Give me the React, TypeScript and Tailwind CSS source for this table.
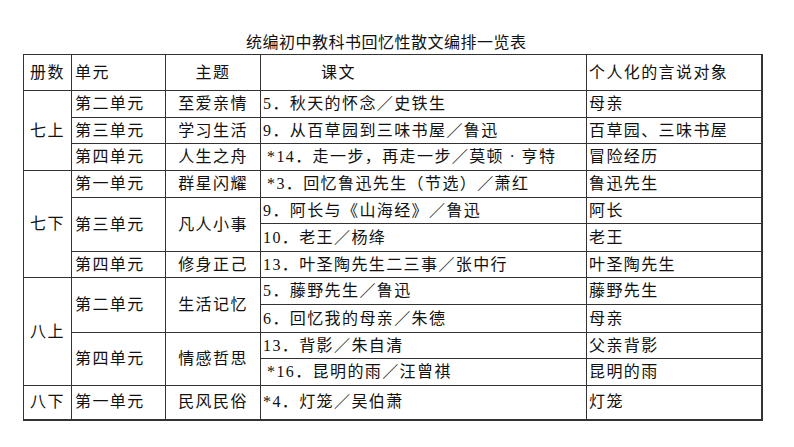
const cell = "border border-[#333] p-0 align-middle";
const unit = `${cell} pl-[3px] text-left`;
const theme = `${cell} text-center`;
const text = `${cell} pl-[2px] text-left`;
const obj = `${cell} pl-[2px] text-left border-r-2`;
const vol = `${cell} text-center`;

export default function App() {
  return (
    <div className="h-[447px] w-[794px] overflow-hidden bg-white text-[#111]">
      <h1 className="pt-[31px] pl-[246px] font-['Noto_Sans_CJK_SC',sans-serif] text-[16px] leading-[20px] tracking-[0.5px]">
        统编初中教科书回忆性散文编排一览表
      </h1>
      <table className="mt-[3px] ml-[23px] w-[738px] table-fixed border-collapse font-['Liberation_Serif','Noto_Sans_CJK_SC',serif] text-[16px] leading-[18px] tracking-[1.4px]">
        <colgroup>
          <col className="w-[48px]" />
          <col className="w-[94px]" />
          <col className="w-[95px]" />
          <col className="w-[326px]" />
          <col className="w-[175px]" />
        </colgroup>
        <tbody>
          <tr className="h-[36px]">
            <td className={vol}>册数</td>
            <td className={unit}>单元</td>
            <td className={theme}>主题</td>
            <td className={`${cell} pl-[60px] text-left`}>课文</td>
            <td className={obj}>个人化的言说对象</td>
          </tr>

          <tr className="h-[27px]">
            <td rowSpan={3} className={vol}>七上</td>
            <td className={unit}>第二单元</td>
            <td className={theme}>至爱亲情</td>
            <td className={text}>5．秋天的怀念／史铁生</td>
            <td className={obj}>母亲</td>
          </tr>
          <tr className="h-[26px]">
            <td className={unit}>第三单元</td>
            <td className={theme}>学习生活</td>
            <td className={text}>9．从百草园到三味书屋／鲁迅</td>
            <td className={obj}>百草园、三味书屋</td>
          </tr>
          <tr className="h-[27px]">
            <td className={unit}>第四单元</td>
            <td className={theme}>人生之舟</td>
            <td className={`${text} pl-[6px]`}>*14．走一步，再走一步／莫顿 · 亨特</td>
            <td className={obj}>冒险经历</td>
          </tr>

          <tr className="h-[27px]">
            <td rowSpan={4} className={vol}>七下</td>
            <td className={unit}>第一单元</td>
            <td className={theme}>群星闪耀</td>
            <td className={`${text} pl-[6px]`}>*3．回忆鲁迅先生（节选）／萧红</td>
            <td className={obj}>鲁迅先生</td>
          </tr>
          <tr className="h-[26px]">
            <td rowSpan={2} className={unit}>第三单元</td>
            <td rowSpan={2} className={theme}>凡人小事</td>
            <td className={text}>9．阿长与《山海经》／鲁迅</td>
            <td className={obj}>阿长</td>
          </tr>
          <tr className="h-[28px]">
            <td className={text}>10．老王／杨绛</td>
            <td className={obj}>老王</td>
          </tr>
          <tr className="h-[26px]">
            <td className={unit}>第四单元</td>
            <td className={theme}>修身正己</td>
            <td className={text}>13．叶圣陶先生二三事／张中行</td>
            <td className={obj}>叶圣陶先生</td>
          </tr>

          <tr className="h-[27px]">
            <td rowSpan={4} className={vol}>八上</td>
            <td rowSpan={2} className={unit}>第二单元</td>
            <td rowSpan={2} className={theme}>生活记忆</td>
            <td className={text}>5．藤野先生／鲁迅</td>
            <td className={obj}>藤野先生</td>
          </tr>
          <tr className="h-[28px]">
            <td className={text}>6．回忆我的母亲／朱德</td>
            <td className={obj}>母亲</td>
          </tr>
          <tr className="h-[26px]">
            <td rowSpan={2} className={unit}>第四单元</td>
            <td rowSpan={2} className={theme}>情感哲思</td>
            <td className={text}>13．背影／朱自清</td>
            <td className={obj}>父亲背影</td>
          </tr>
          <tr className="h-[27px]">
            <td className={`${text} pl-[6px]`}>*16．昆明的雨／汪曾祺</td>
            <td className={obj}>昆明的雨</td>
          </tr>

          <tr className="h-[34px]">
            <td className={`${vol} border-b-2`}>八下</td>
            <td className={`${unit} border-b-2`}>第一单元</td>
            <td className={`${theme} border-b-2`}>民风民俗</td>
            <td className={`${text} border-b-2`}>*4．灯笼／吴伯萧</td>
            <td className={`${obj} border-b-2`}>灯笼</td>
          </tr>
        </tbody>
      </table>
    </div>
  );
}
